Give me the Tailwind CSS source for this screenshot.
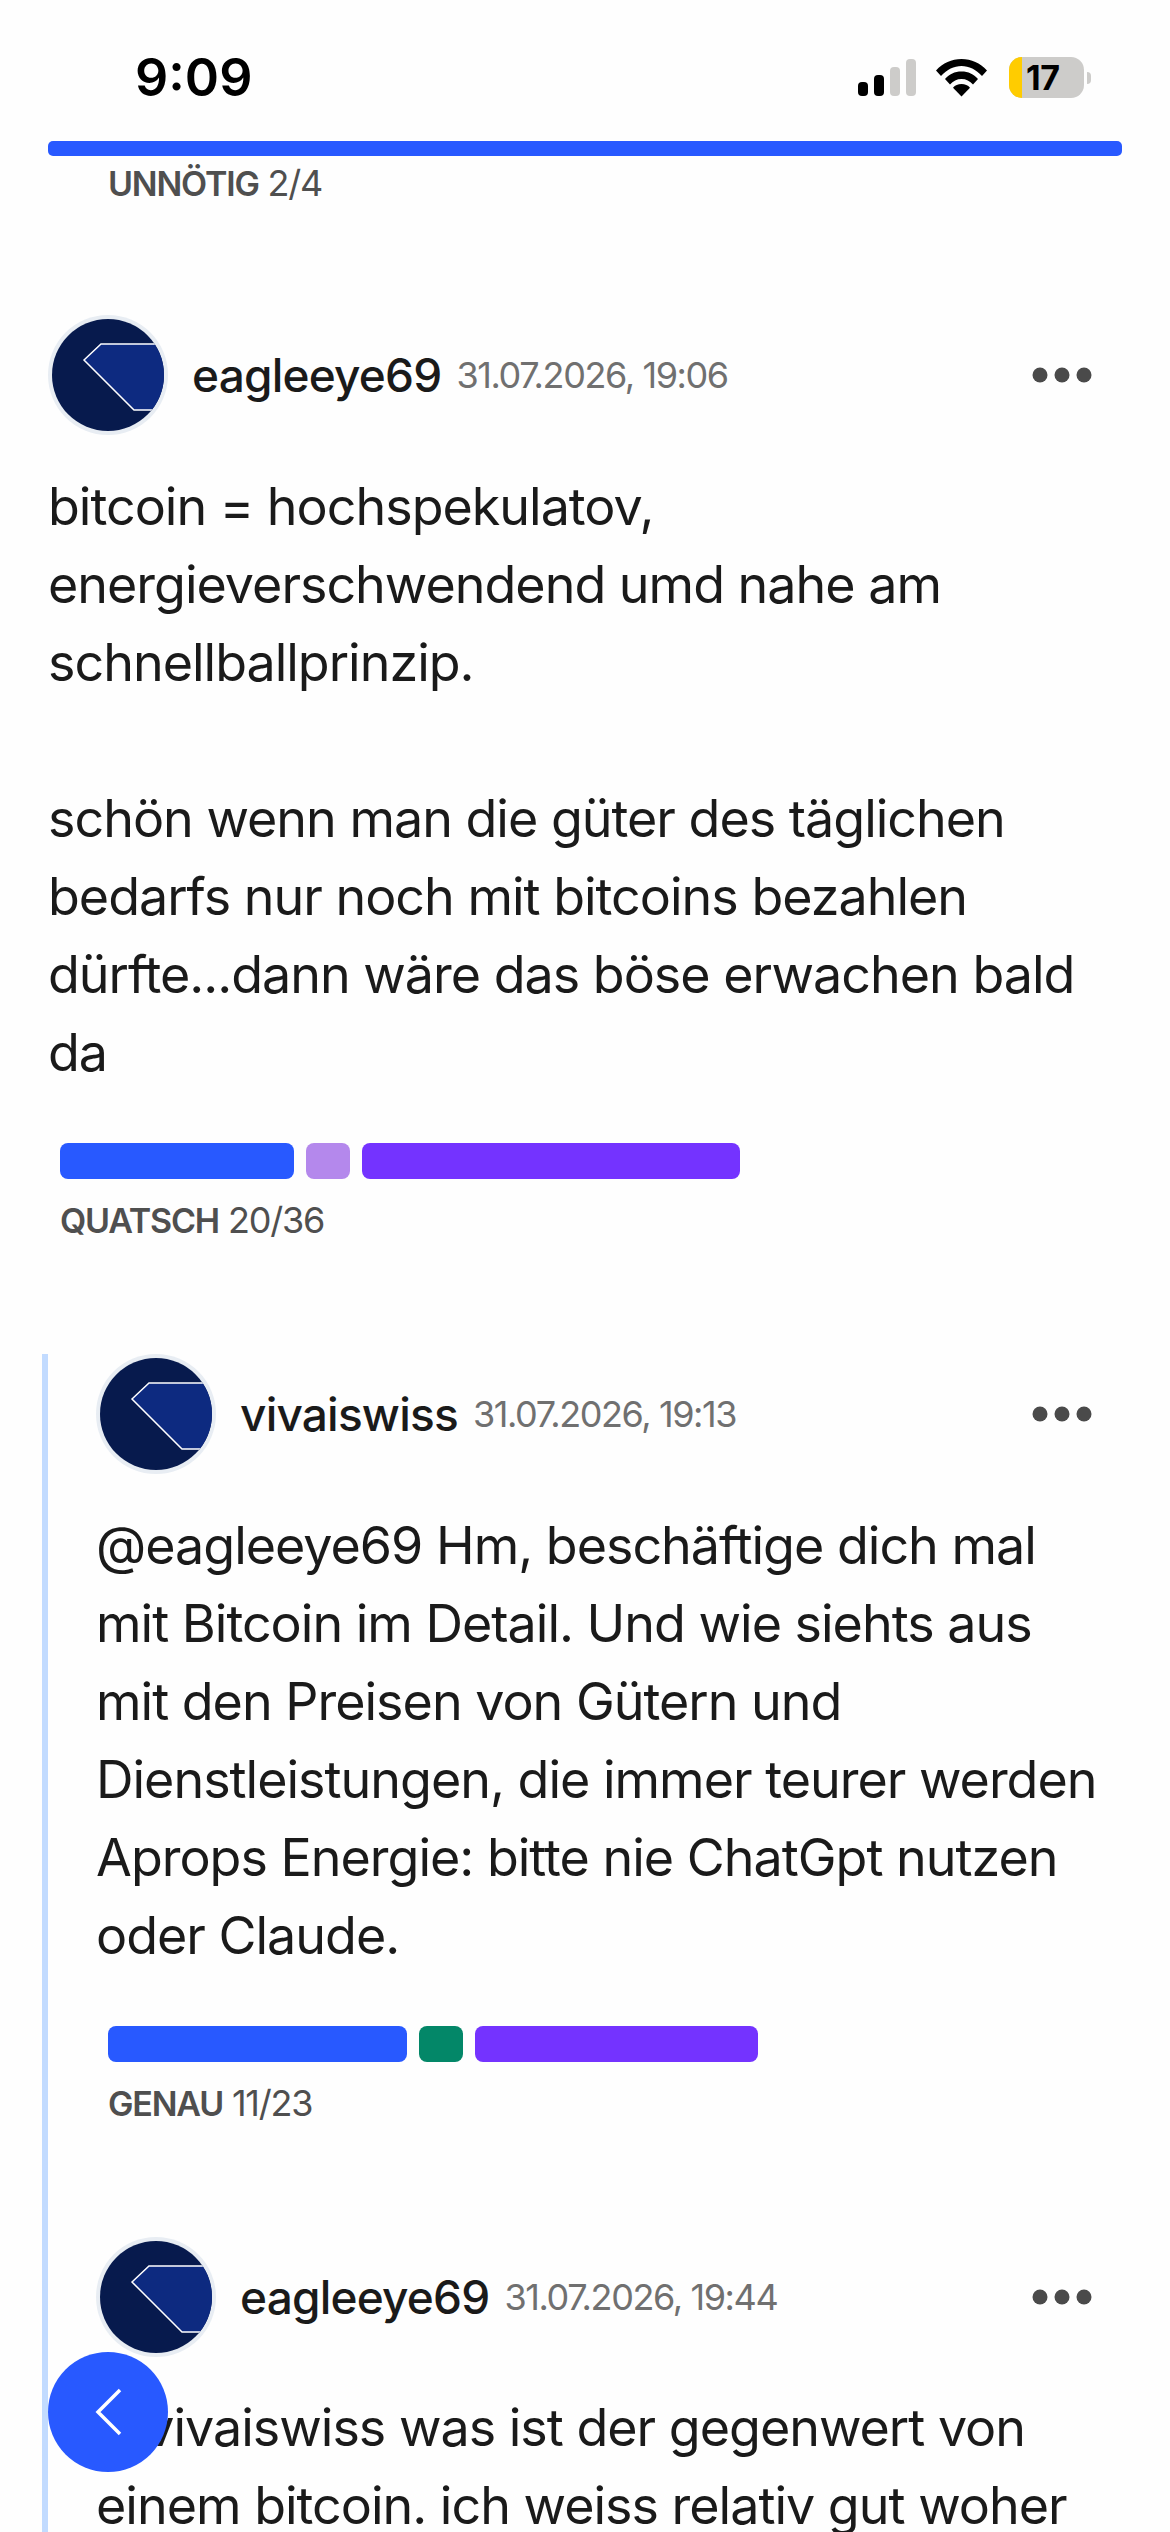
<!doctype html>
<html lang="de"><head><meta charset="utf-8"><script src="https://cdn.jsdelivr.net/npm/@tailwindcss/browser@4"></script></head>
<body class="bg-[#fefefe]">
<div class="relative w-[1170px] h-[2532px] overflow-hidden bg-[#fefefe] text-[#1a1a1a] font-['Inter',sans-serif]">
  <!-- status bar -->
  <div class="flex justify-between h-[141px] pl-[135px] pr-[79px]">
    <div class="pt-[44px] text-[52px] leading-[68px] font-semibold text-black">9:09</div>
    <div class="flex items-start pt-[57px]">
      <svg width="60" height="40" viewBox="0 0 60 40" class="mt-[2px]"><rect x="2" y="23" width="10" height="14" rx="4" fill="#000"/><rect x="18" y="16" width="10" height="21" rx="4" fill="#000"/><rect x="34" y="8" width="10" height="29" rx="4" fill="#cdccca"/><rect x="50" y="0" width="10" height="37" rx="4" fill="#cdccca"/></svg>
      <svg width="51" height="38" viewBox="0 0 51 38" class="ml-[20px] mt-[2px]"><path d="M25.5 0C15.5 0 7 4 0 11.5l5 5.5C11 10.500 18 7 25.500 7S40 10.500 46 17l5-5.500C44 4 35.500 0 25.500 0Z" fill="#000"/><path d="M25.500 12.500C18.500 12.500 13.500 15 9 20l5 5.500c3-3.500 7-5.500 11.500-5.500s8.500 2 11.500 5.500l5-5.500C37.500 15 32.500 12.500 25.500 12.500Z" fill="#000"/><path d="M25.500 25c-3.500 0-6.500 1.300-8.500 3.700L25.500 37.500 34 28.700C32 26.300 29 25 25.500 25Z" fill="#000"/></svg>
      <div class="flex items-center ml-[22px]">
        <div class="relative w-[75px] h-[41px] rounded-[13px] overflow-hidden bg-[#cdccca]">
          <div class="w-[13px] h-full bg-[#ffcc00]"></div>
          <div class="absolute left-[17px] top-0 text-[34px] leading-[41px] font-bold text-black tracking-[-0.5px]">17</div>
        </div>
        <div class="ml-[3px] w-[4px] h-[12px] rounded-r-full bg-[#cdccca]"></div>
      </div>
    </div>
  </div>
  <div class="mx-[48px] h-[15px] rounded-[5px] bg-[#2859ff]"></div>
  <div class="pl-[108px] mt-[5px] text-[36px] leading-[44px] tracking-[-1.2px] text-[#4f4f4f]"><b class="text-[34px] font-semibold">UNNÖTIG</b> 2/4</div>

  <!-- comment 1 -->
  <div class="pl-[48px] pr-[48px] pt-[109px]">
    <div class="flex items-center h-[120px]">
      <svg width="120" height="120" viewBox="0 0 120 120" class="shrink-0"><defs><clipPath id="c1"><circle cx="60" cy="60" r="56"/></clipPath></defs><circle cx="60" cy="60" r="60" fill="#e8edf3"/><g clip-path="url(#c1)"><rect width="120" height="120" fill="#071a4d"/><path d="M36 45 53 29H130V95H86Z" fill="#0d2a80" stroke="#fff" stroke-width="1.500"/></g></svg>
      <span class="ml-[24px] text-[46px] font-medium tracking-[-0.8px]">eagleeye69</span>
      <span class="ml-[15px] text-[36px] tracking-[-1.4px] text-[#707070]">31.07.2026, 19:06</span>
      <svg width="60" height="16" viewBox="0 0 60 16" class="ml-auto mr-[30px]"><circle cx="8" cy="8" r="7.500" fill="#4a4a4a"/><circle cx="30" cy="8" r="7.500" fill="#4a4a4a"/><circle cx="52" cy="8" r="7.500" fill="#4a4a4a"/></svg>
    </div>
    <p class="mt-[33px] text-[52px] leading-[78px] tracking-[-1px] whitespace-nowrap">bitcoin = hochspekulatov,<br>energieverschwendend umd nahe am<br>schnellballprinzip.<br><br>schön wenn man die güter des täglichen<br>bedarfs nur noch mit bitcoins bezahlen<br>dürfte...dann wäre das böse erwachen bald<br>da</p>
    <div class="flex gap-[12px] mt-[51px] pl-[12px]">
      <div class="w-[234px] h-[36px] rounded-[8px] bg-[#2859ff]"></div>
      <div class="w-[44px] h-[36px] rounded-[8px] bg-[#b488ec]"></div>
      <div class="w-[378px] h-[36px] rounded-[8px] bg-[#7433ff]"></div>
    </div>
    <div class="pl-[12px] mt-[19px] text-[36px] leading-[44px] tracking-[-1.2px] text-[#4f4f4f]"><b class="text-[34px] font-semibold">QUATSCH</b> 20/36</div>
  </div>

  <!-- nested replies -->
  <div class="ml-[42px] mt-[111px] pl-[48px] pr-[48px] border-l-[6px] border-[#c2dbff] h-[1300px]">
    <div class="flex items-center h-[120px]">
      <svg width="120" height="120" viewBox="0 0 120 120" class="shrink-0"><defs><clipPath id="c2"><circle cx="60" cy="60" r="56"/></clipPath></defs><circle cx="60" cy="60" r="60" fill="#e8edf3"/><g clip-path="url(#c2)"><rect width="120" height="120" fill="#071a4d"/><path d="M36 45 53 29H130V95H86Z" fill="#0d2a80" stroke="#fff" stroke-width="1.500"/></g></svg>
      <span class="ml-[24px] text-[46px] font-medium tracking-[-0.8px]">vivaiswiss</span>
      <span class="ml-[15px] text-[36px] tracking-[-1.4px] text-[#707070]">31.07.2026, 19:13</span>
      <svg width="60" height="16" viewBox="0 0 60 16" class="ml-auto mr-[30px]"><circle cx="8" cy="8" r="7.500" fill="#4a4a4a"/><circle cx="30" cy="8" r="7.500" fill="#4a4a4a"/><circle cx="52" cy="8" r="7.500" fill="#4a4a4a"/></svg>
    </div>
    <p class="mt-[33px] text-[52px] leading-[78px] tracking-[-1px] whitespace-nowrap">@eagleeye69 Hm, beschäftige dich mal<br>mit Bitcoin im Detail. Und wie siehts aus<br>mit den Preisen von Gütern und<br>Dienstleistungen, die immer teurer werden<br>Aprops Energie: bitte nie ChatGpt nutzen<br>oder Claude.</p>
    <div class="flex gap-[12px] mt-[51px] pl-[12px]">
      <div class="w-[299px] h-[36px] rounded-[8px] bg-[#2859ff]"></div>
      <div class="w-[44px] h-[36px] rounded-[8px] bg-[#038768]"></div>
      <div class="w-[283px] h-[36px] rounded-[8px] bg-[#7433ff]"></div>
    </div>
    <div class="pl-[12px] mt-[19px] text-[36px] leading-[44px] tracking-[-1.2px] text-[#4f4f4f]"><b class="text-[34px] font-semibold">GENAU</b> 11/23</div>

    <div class="flex items-center h-[120px] mt-[111px]">
      <svg width="120" height="120" viewBox="0 0 120 120" class="shrink-0"><defs><clipPath id="c3"><circle cx="60" cy="60" r="56"/></clipPath></defs><circle cx="60" cy="60" r="60" fill="#e8edf3"/><g clip-path="url(#c3)"><rect width="120" height="120" fill="#071a4d"/><path d="M36 45 53 29H130V95H86Z" fill="#0d2a80" stroke="#fff" stroke-width="1.500"/></g></svg>
      <span class="ml-[24px] text-[46px] font-medium tracking-[-0.8px]">eagleeye69</span>
      <span class="ml-[15px] text-[36px] tracking-[-1.4px] text-[#707070]">31.07.2026, 19:44</span>
      <svg width="60" height="16" viewBox="0 0 60 16" class="ml-auto mr-[30px]"><circle cx="8" cy="8" r="7.500" fill="#4a4a4a"/><circle cx="30" cy="8" r="7.500" fill="#4a4a4a"/><circle cx="52" cy="8" r="7.500" fill="#4a4a4a"/></svg>
    </div>
    <p class="mt-[32px] text-[52px] leading-[78px] tracking-[-1px] whitespace-nowrap">@vivaiswiss was ist der gegenwert von<br>einem bitcoin. ich weiss relativ gut woher</p>
  </div>

  <!-- floating back button -->
  <div class="absolute left-[48px] top-[2352px] w-[120px] h-[120px] rounded-full bg-[#2859ff] flex items-center justify-center">
    <svg width="28" height="50" viewBox="0 0 28 50" class="mr-[-1px]"><path d="M25 3 3 25l22 22" transform="translate(0 0)" fill="none" stroke="#fff" stroke-width="3.500"/></svg>
  </div>
</div>
</body></html>
